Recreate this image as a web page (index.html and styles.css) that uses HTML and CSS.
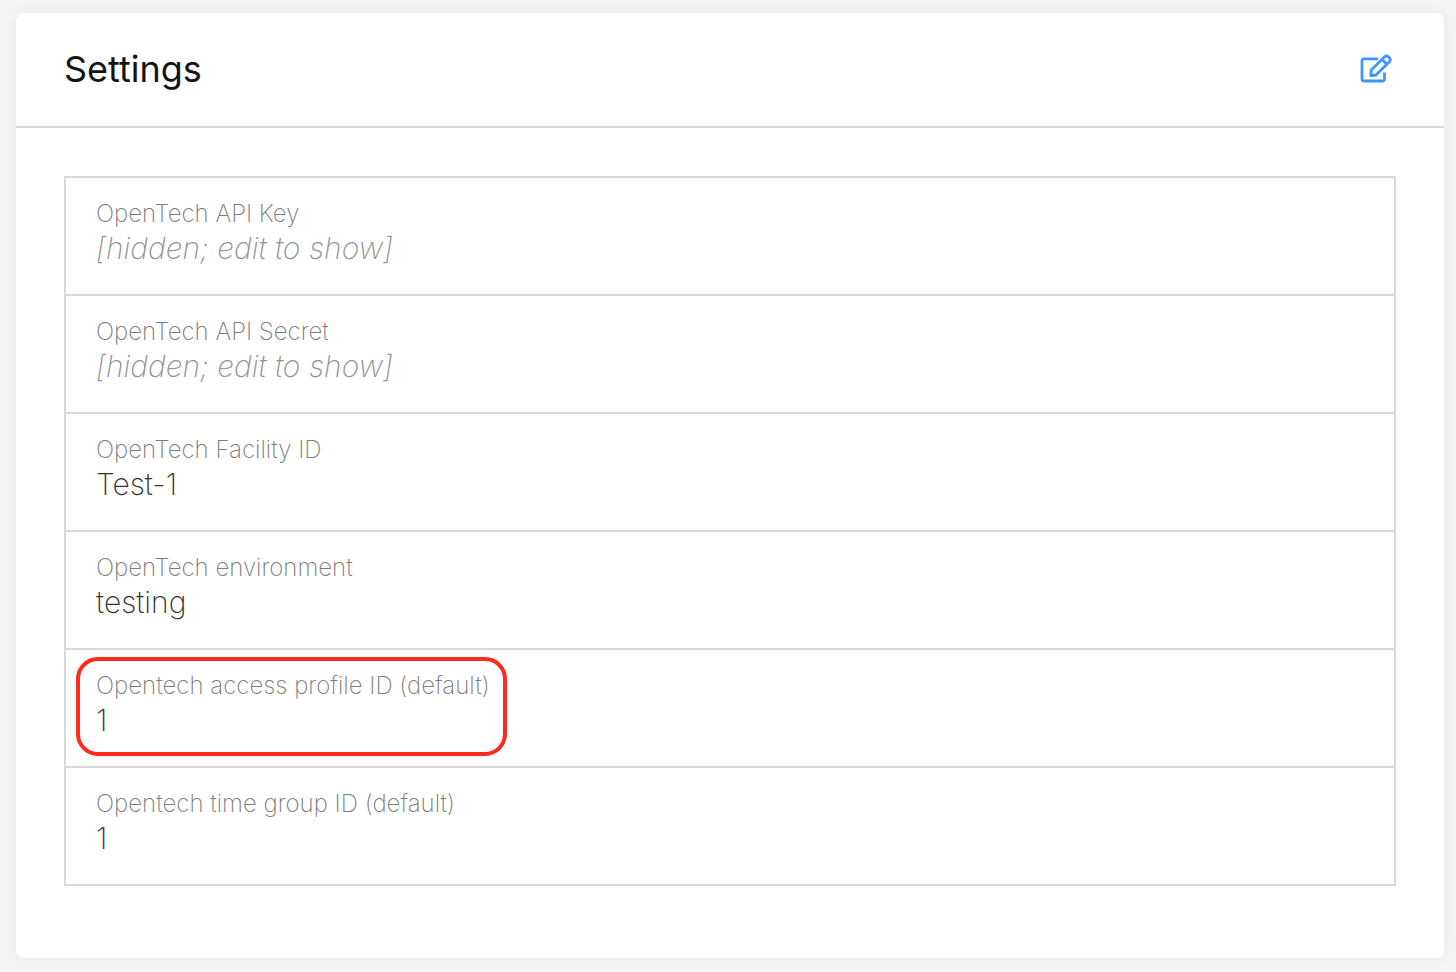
FILE: index.html
```html
<!DOCTYPE html>
<html lang="en">
<head>
<meta charset="utf-8">
<meta name="viewport" content="width=device-width, initial-scale=1">
<title>Settings</title>
<link rel="stylesheet" href="styles.css">
</head>
<body>
<main class="card">
  <header class="card-header">
    <h1 class="title">Settings</h1>
    <button class="edit" type="button" aria-label="Edit settings">
      <svg viewBox="0 0 32 32" width="32" height="32" fill="none" stroke="currentColor" stroke-width="2.800" stroke-linejoin="round" stroke-linecap="butt" aria-hidden="true">
        <path d="M18 4.800H4Q2 4.800 2 6.800V25Q2 27 4 27H22.500Q24.500 27 24.500 25V18.500"/>
        <path d="M10.800 21.500L11.300 16L24.800 2.600Q26.500 1.300 28.200 2.600L29.600 4Q31 5.800 29.600 7.500L16 21Z"/>
        <path d="M22 5.200L27 10.200"/>
      </svg>
    </button>
  </header>
  <div class="card-body">
    <dl class="settings">
      <div class="row"><dt class="label">OpenTech API Key</dt><dd class="value hidden-value">[hidden; edit to show]</dd></div>
      <div class="row"><dt class="label">OpenTech API Secret</dt><dd class="value hidden-value">[hidden; edit to show]</dd></div>
      <div class="row"><dt class="label">OpenTech Facility ID</dt><dd class="value">Test-1</dd></div>
      <div class="row"><dt class="label">OpenTech environment</dt><dd class="value">testing</dd></div>
      <div class="row highlighted"><dt class="label">Opentech access profile ID (default)</dt><dd class="value">1</dd></div>
      <div class="row"><dt class="label">Opentech time group ID (default)</dt><dd class="value">1</dd></div>
    </dl>
  </div>
</main>
</body>
</html>
```
FILE: styles.css
```css
*, *::after { box-sizing: border-box; }
body {
  margin: 0;
  padding: 13px 12px 14px 16px;
  background: #f4f4f4;
  font-family: Inter, "Liberation Sans", sans-serif;
  font-weight: 200;
}
.card {
  background: #fff;
  border-radius: 8px;
  box-shadow: 0 0 16px rgba(0, 0, 0, 0.05);
}
.card-header {
  display: flex;
  align-items: center;
  justify-content: space-between;
  padding: 32px 52px 32px 48px;
  border-bottom: 2px solid #d9d9d9;
}
.title {
  margin: 0;
  font-size: 36px;
  line-height: 49px;
  font-weight: 400;
  color: #141414;
}
.edit {
  display: flex;
  padding: 0;
  border: 0;
  background: none;
  color: #4096ff;
  cursor: pointer;
}
.card-body { padding: 48px 48px 72px; }
.settings {
  margin: 0;
  border: 2px solid #d9d9d9;
}
.row {
  position: relative;
  padding: 20px 30px 28px;
}
.row + .row { border-top: 2px solid #d9d9d9; }
.label {
  font-size: 24px;
  line-height: 32px;
  color: #7c7c7c;
}
.value {
  margin: 0;
  font-size: 30px;
  line-height: 36px;
  color: #333;
}
.hidden-value {
  font-style: italic;
  color: #949494;
}
.highlighted::after {
  content: "";
  position: absolute;
  top: 7px;
  left: 10px;
  width: 431px;
  height: 99px;
  border: 4px solid #ff2a1a;
  border-radius: 22px;
}
```
